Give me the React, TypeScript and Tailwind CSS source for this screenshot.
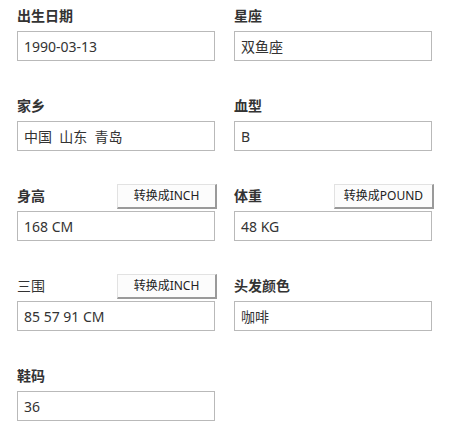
import React from 'react'

interface Field {
  label: string
  value: string
  button?: string
  plain?: boolean
}

const ROWS: Field[][] = [
  [
    { label: '出生日期', value: '1990-03-13' },
    { label: '星座', value: '双鱼座' },
  ],
  [
    { label: '家乡', value: '中国  山东  青岛' },
    { label: '血型', value: 'B' },
  ],
  [
    { label: '身高', value: '168 CM', button: '转换成INCH' },
    { label: '体重', value: '48 KG', button: '转换成POUND' },
  ],
  [
    { label: '三围', value: '85 57 91 CM', button: '转换成INCH', plain: true },
    { label: '头发颜色', value: '咖啡' },
  ],
  [{ label: '鞋码', value: '36' }],
]

function FieldBlock({ field }: { field: Field }) {
  return (
    <div className="w-[198px] h-[90px]">
      <div className="flex justify-between h-[31px]">
        <span
          className={`pt-[6px] text-[14px] leading-[20px] text-[#333] ${field.plain ? 'font-normal' : 'font-bold'}`}
        >
          {field.label}
        </span>
        {field.button && (
          <button className="mt-[4px] h-[25px] w-[100px] -mr-[2px] bg-[#fcfcfc] border-t border-l border-r-2 border-b-2 border-t-[#e2e2e2] border-l-[#e2e2e2] border-r-[#9a9a9a] border-b-[#9a9a9a] text-[12px] leading-none text-[#222]">
            {field.button}
          </button>
        )}
      </div>
      <div className="h-[30px] border border-[#b9b9b9] bg-white pl-[6px] flex items-center text-[14px] text-[#333] whitespace-pre">
        {field.value}
      </div>
    </div>
  )
}

export default function App() {
  return (
    <div
      className="w-[455px] h-[438px] bg-white pl-[17px]"
      style={{ fontFamily: '"Noto Sans", "Noto Sans CJK SC", sans-serif' }}
    >
      {ROWS.map((row, i) => (
        <div key={i} className="flex gap-[19px]">
          {row.map((f) => (
            <FieldBlock key={f.label} field={f} />
          ))}
        </div>
      ))}
    </div>
  )
}
